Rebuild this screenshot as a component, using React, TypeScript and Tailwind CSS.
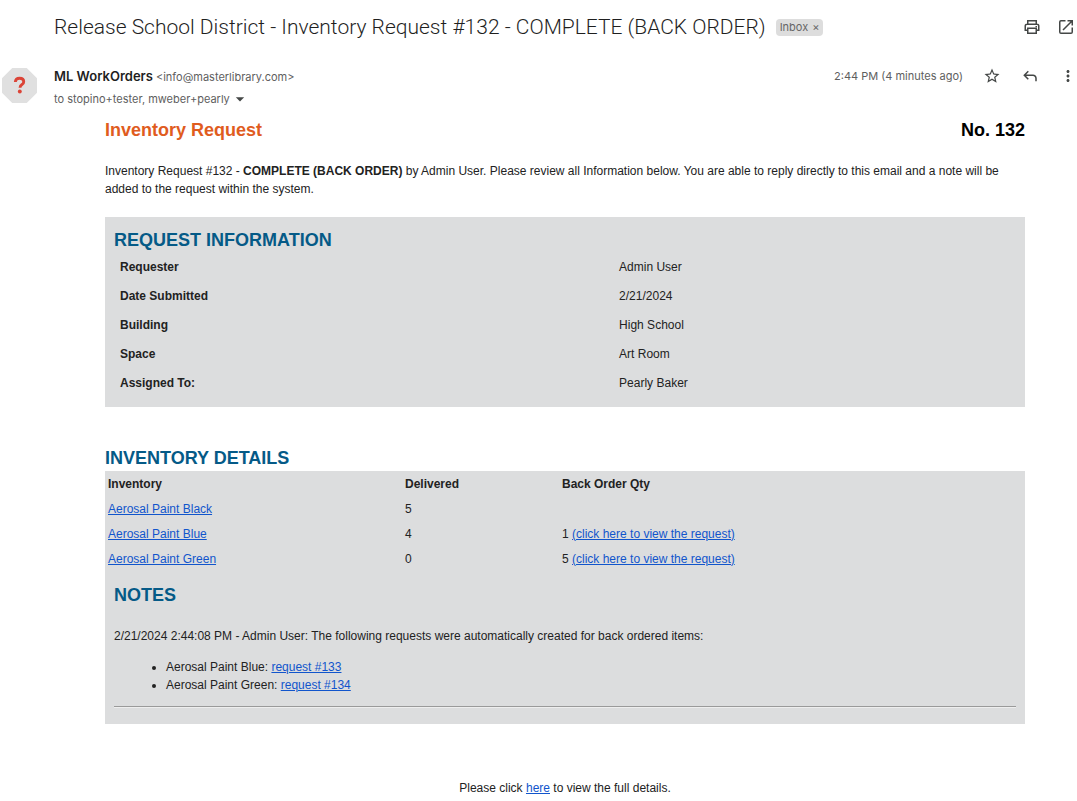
import React from 'react';
import { MdArrowDropDown, MdMoreVert, MdStarBorder } from 'react-icons/md';

const requestInfo = [
  { label: 'Requester', value: 'Admin User' },
  { label: 'Date Submitted', value: '2/21/2024' },
  { label: 'Building', value: 'High School' },
  { label: 'Space', value: 'Art Room' },
  { label: 'Assigned To:', value: 'Pearly Baker' }
];

const inventory = [
  { name: 'Aerosal Paint Black', delivered: 5, backOrder: null },
  { name: 'Aerosal Paint Blue', delivered: 4, backOrder: 1 },
  { name: 'Aerosal Paint Green', delivered: 0, backOrder: 5 }
];

const createdRequests = [
  { name: 'Aerosal Paint Blue', request: 'request #133' },
  { name: 'Aerosal Paint Green', request: 'request #134' }
];

const PrintIcon = () => (
  <svg viewBox="0 0 16 16" className="size-4" fill="none" stroke="currentColor" strokeWidth="1.5">
    <path d="M3.75 5V1.75h8.5V5M3.5 11.25H1.25V7q0-1.75 1.75-1.75h10q1.75 0 1.75 1.75v4.25H12.5" />
    <path d="M3.75 9.25h8.5v5h-8.5z" />
    <path d="M11.5 7.5h1.5" strokeWidth="1.25" />
  </svg>
);

const OpenIcon = () => (
  <svg viewBox="0 0 16 16" className="size-4" fill="none" stroke="currentColor" strokeWidth="1.5">
    <path d="M7.5 1.75H3Q1.75 1.75 1.75 3v10q0 1.25 1.25 1.25h10q1.25 0 1.25-1.25V8.5" />
    <path d="M9.5 1.75h4.75V6.5M14 2 5 11" />
  </svg>
);

const ReplyIcon = () => (
  <svg viewBox="0 -960 960 960" className="size-[18px]" fill="currentColor">
    <path d="M760-200v-160q0-50-35-85t-85-35H273l144 144-57 56-240-240 240-240 57 56-144 144h367q83 0 141.5 58.5T840-360v160h-80Z" />
  </svg>
);

const Avatar = () => (
  <svg viewBox="0 0 34 34" className="size-[35px]" role="img" aria-label="Unverified sender">
    <path d="M10 0h14l10 10v14L24 34H10L0 24V10z" fill="#e0e0e0" />
    <path
      d="M12.9 13.6q.3-3.7 4.2-3.7 4 0 4 3.4 0 1.7-1.7 2.8-1.9 1.2-1.9 3.2"
      fill="none"
      stroke="#db4437"
      strokeWidth="2.8"
    />
    <circle cx="17.3" cy="22.8" r="1.9" fill="#db4437" />
  </svg>
);

const TextLink = ({ children }: { children: React.ReactNode }) => (
  <a href="#" className="text-[#1155cc] underline">
    {children}
  </a>
);

const SectionTitle = ({ children }: { children: React.ReactNode }) => (
  <h3 className="text-lg leading-6 font-bold text-[#055a87]">{children}</h3>
);

const MailHeader = () => (
  <header className="font-[Inter,sans-serif] text-[11px] text-[#5e5e5e]">
    <div className="flex items-center justify-between pt-3 pl-[54px] pr-[3px]">
      <div className="flex items-center gap-2.5">
        <h1 className="font-[Roboto,sans-serif] text-[21px] leading-[30px] font-light text-[#1f1f1f]">
          Release School District - Inventory Request #132 - COMPLETE (BACK ORDER)
        </h1>
        <span className="flex h-[17px] items-center gap-1 rounded bg-[#dddddd] px-1 text-[#666666]">
          Inbox
          <button aria-label="Remove label Inbox" className="leading-none">
            ×
          </button>
        </span>
      </div>
      <div className="flex gap-[18px] text-[#444746]">
        <button aria-label="Print all">
          <PrintIcon />
        </button>
        <button aria-label="In new window">
          <OpenIcon />
        </button>
      </div>
    </div>
    <div className="mt-6 flex pl-0.5">
      <div className="w-[52px] pt-0.5">
        <Avatar />
      </div>
      <div className="grow">
        <div className="flex items-center justify-between">
          <div className="flex items-baseline gap-[3px]">
            <h2 className="text-[13px] leading-5 font-semibold text-[#1f1f1f]">ML WorkOrders</h2>
            <span>&lt;info@masterlibrary.com&gt;</span>
          </div>
          <div className="flex items-center gap-5 text-[#444746]">
            <time className="text-[#5e5e5e]">2:44 PM (4 minutes ago)</time>
            <button aria-label="Star">
              <MdStarBorder size={18} />
            </button>
            <button aria-label="Reply">
              <ReplyIcon />
            </button>
            <button aria-label="More">
              <MdMoreVert size={18} />
            </button>
          </div>
        </div>
        <div className="mt-[3px] flex items-center leading-5">
          to stopino+tester, mweber+pearly
          <button aria-label="Show details">
            <MdArrowDropDown size={20} className="text-[#444746]" />
          </button>
        </div>
      </div>
    </div>
  </header>
);

const App = () => (
  <div className="bg-white">
    <MailHeader />
    <main className="mr-[52px] ml-[105px] pt-[9px] font-['Liberation_Sans',Arial,sans-serif] text-xs leading-[18px] text-[#222222]">
      <div className="flex justify-between text-lg leading-6 font-bold">
        <h2 className="text-[#e05c1e]">Inventory Request</h2>
        <span className="text-black">No. 132</span>
      </div>
      <p className="mt-5">
        Inventory Request #132 - <b>COMPLETE (BACK ORDER)</b> by Admin User. Please review all
        Information below. You are able to reply directly to this email and a note will be added to
        the request within the system.
      </p>

      <section className="mt-[19px] bg-[#dcddde] px-[9px] pt-[11px] pb-2.5">
        <SectionTitle>REQUEST INFORMATION</SectionTitle>
        <table className="w-full text-left">
          <tbody>
            {requestInfo.map(({ label, value }) => (
              <tr key={label} className="h-[29px]">
                <th className="w-[56%] pl-1.5">{label}</th>
                <td>{value}</td>
              </tr>
            ))}
          </tbody>
        </table>
      </section>

      <section className="mt-[39px]">
        <SectionTitle>INVENTORY DETAILS</SectionTitle>
        <div className="mt-px bg-[#dcddde] pb-4">
          <table className="w-full text-left">
            <thead>
              <tr className="h-[25px]">
                <th className="w-[297px] pl-[3px]">Inventory</th>
                <th className="w-[157px] pl-[3px]">Delivered</th>
                <th className="pl-[3px]">Back Order Qty</th>
              </tr>
            </thead>
            <tbody>
              {inventory.map(({ name, delivered, backOrder }) => (
                <tr key={name} className="h-[25px]">
                  <td className="pl-[3px]">
                    <TextLink>{name}</TextLink>
                  </td>
                  <td className="pl-[3px]">{delivered}</td>
                  <td className="pl-[3px]">
                    {backOrder ? (
                      <>
                        {backOrder} <TextLink>(click here to view the request)</TextLink>
                      </>
                    ) : null}
                  </td>
                </tr>
              ))}
            </tbody>
          </table>
          <div className="px-[9px] pt-3">
            <SectionTitle>NOTES</SectionTitle>
            <p className="mt-5">
              2/21/2024 2:44:08 PM - Admin User: The following requests were automatically created
              for back ordered items:
            </p>
            <ul className="mt-[13px] list-disc pl-[52px]">
              {createdRequests.map(({ name, request }) => (
                <li key={name}>
                  {name}: <TextLink>{request}</TextLink>
                </li>
              ))}
            </ul>
            <hr className="mt-3 h-0.5 border-t border-b border-t-[#9a9a9a] border-b-[#eeeeee]" />
          </div>
        </div>
      </section>

      <p className="mt-[55px] text-center">
        Please click <TextLink>here</TextLink> to view the full details.
      </p>
    </main>
  </div>
);

export default App;
